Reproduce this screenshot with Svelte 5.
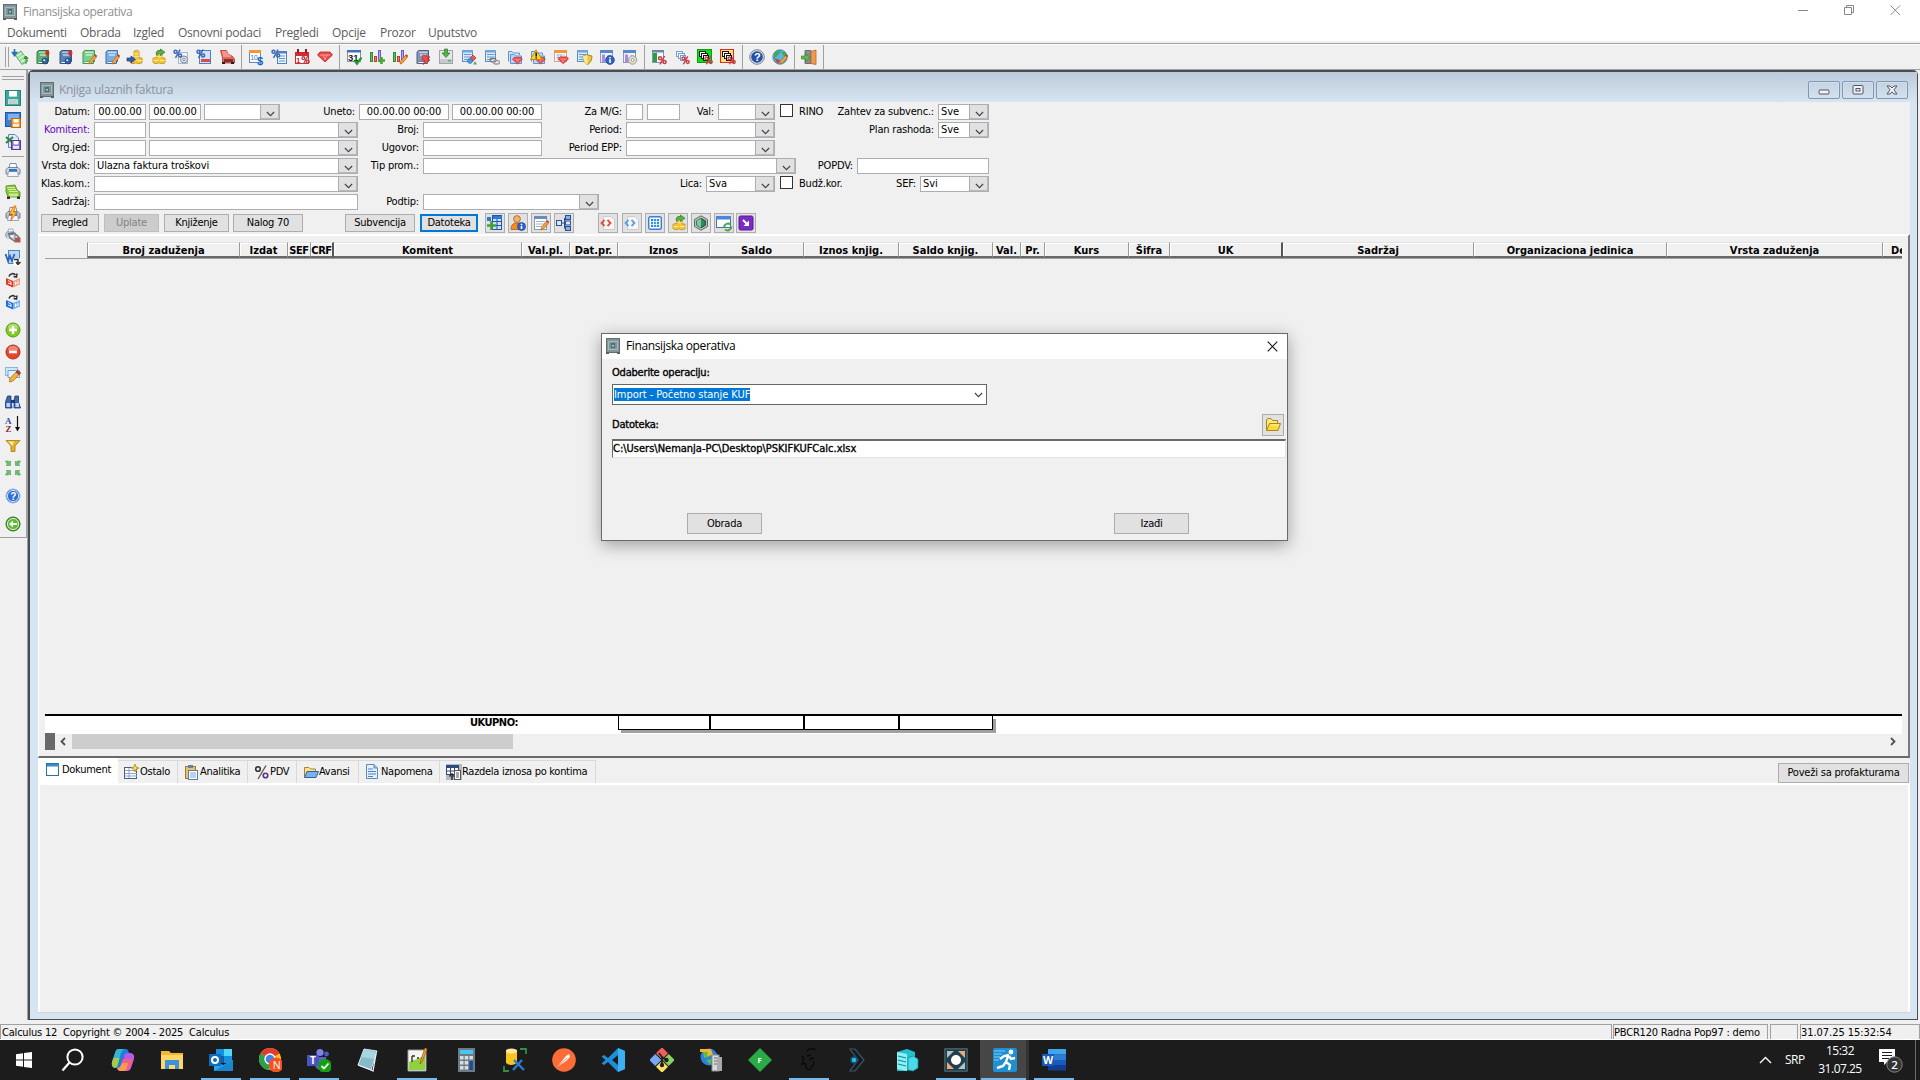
<script lang="ts">
	type Item = { k: 'label' | 'text' | 'box' | 'combo' | 'check' | 'gap'; w: number; t?: string; cls?: string };

	const label = (w: number, t: string, cls = ''): Item => ({ k: 'label', w, t, cls });
	const text = (w: number, t: string): Item => ({ k: 'text', w, t });
	const box = (w: number, t = '', cls = ''): Item => ({ k: 'box', w, t, cls });
	const combo = (w: number, t = ''): Item => ({ k: 'combo', w, t });
	const gap = (w: number): Item => ({ k: 'gap', w });
	const check: Item = { k: 'check', w: 13 };

	const menu = ['Dokumenti', 'Obrada', 'Izgled', 'Osnovni podaci', 'Pregledi', 'Opcije', 'Prozor', 'Uputstvo'];
	const menuWidths = [73, 53, 45, 97, 57, 48, 48, 50];

	// Filter form, one array per line
	const rows: Item[][] = [
		[
			label(56, 'Datum:'), box(52, '00.00.00', 'num'), gap(3), box(52, '00.00.00', 'num'), gap(3), combo(76),
			label(79, 'Uneto:'), box(90, '00.00.00 00:00', 'num'), gap(3), box(90, '00.00.00 00:00', 'num'),
			label(84, 'Za M/G:'), box(17), gap(4), box(33), label(38, 'Val:'), combo(57),
			gap(5), check, text(40, 'RINO'), label(105, 'Zahtev za subvenc.:'), combo(51, 'Sve')
		],
		[
			label(56, 'Komitent:', 'link'), box(52), gap(3), combo(209), label(65, 'Broj:'), box(119),
			label(84, 'Period:'), combo(149), label(163, 'Plan rashoda:'), combo(51, 'Sve')
		],
		[
			label(56, 'Org.jed:'), box(52), gap(3), combo(209), label(65, 'Ugovor:'), box(119),
			label(84, 'Period EPP:'), combo(149)
		],
		[
			label(56, 'Vrsta dok:'), combo(264, 'Ulazna faktura troškovi'), label(65, 'Tip prom.:'), combo(373),
			label(61, 'POPDV:'), box(132)
		],
		[
			label(56, 'Klas.kom.:'), combo(264), label(348, 'Lica:'), combo(69, 'Sva'),
			gap(5), check, text(60, 'Budž.kor.'), label(67, 'SEF:'), combo(69, 'Svi')
		],
		[label(56, 'Sadržaj:'), box(264), label(65, 'Podtip:'), combo(176)]
	];

	const columns: [string, number][] = [
		['Broj zaduženja', 153], ['Izdat', 48], ['SEF', 23], ['CRF', 23], ['Komitent', 188], ['Val.pl.', 48],
		['Dat.pr.', 48], ['Iznos', 92], ['Saldo', 94], ['Iznos knjig.', 95], ['Saldo knjig.', 94], ['Val.', 28],
		['Pr.', 24], ['Kurs', 84], ['Šifra', 41], ['UK', 113], ['Sadržaj', 191], ['Organizaciona jedinica', 193],
		['Vrsta zaduženja', 216], ['De', 32]
	];

	const buttons: [string, number, number, string][] = [
		['Pregled', 58, 5, ''], ['Uplate', 55, 5, 'off'], ['Knjiženje', 65, 4, ''], ['Nalog 70', 70, 42, ''],
		['Subvencija', 70, 5, ''], ['Datoteka', 58, 7, 'focus']
	];
	const iconButtons: [string, number][] = [
		['addTable', 3], ['userInfo', 3], ['formEdit', 3], ['tree', 24], ['codeRed', 4], ['codeBlue', 3],
		['grid', 3], ['coinsOut', 3], ['hex', 3], ['winRefresh', 2], ['purple', 0]
	];

	const tabs: [string, string, number][] = [
		['tabWindow', 'Dokument', 80], ['tabNew', 'Ostalo', 60], ['tabClip', 'Analitika', 70], ['tabPercent', 'PDV', 49],
		['tabFolder', 'Avansi', 62], ['tabNote', 'Napomena', 81], ['tabSplit', 'Razdela iznosa po kontima', 156]
	];

	const topBar = [
		'money', 'bookGreen', 'bookBlue', 'bookGreenPen', 'bookBluePen', 'coinsIn', 'coinsOut', 'pctGear', 'pctMinus', 'printRed', '|',
		'cal10', 'pctDoc', 'calPct', 'gem', '|',
		'cal31', 'barsAdd', 'barsPen', 'bookBolt', 'drive', 'listShapes', 'listLink', 'foldersGem', 'foldersWarn', 'calGem',
		'listShield', 'winInfo', 'winClock', '|',
		'sheetPct', 'copyPct', 'copyGreen', 'copyRed', '|', 'help', 'globe', '|', 'exit', '|'
	];

	// name and the space under it
	const sideBar: [string, number][] = [
		['save', 6], ['saveGrid', 6], ['saveXls', 6], ['-', 5], ['print', 6], ['printGreen', 6], ['printBolt', 6], ['printLink', 6],
		['word', 6], ['boxRed', 6], ['boxBlue', 12], ['plus', 6], ['minus', 6], ['edit', 12], ['find', 6], ['sort', 6],
		['filter', 6], ['shrink', 12], ['helpBlue', 12], ['back', 0]
	];

	const r = (x: number, y: number, w: number, h: number, f: string, s = 'none') =>
		`<rect x="${x}" y="${y}" width="${w}" height="${h}" fill="${f}" stroke="${s}"/>`;
	const p = (d: string, f: string, s = 'none', w = 1) => `<path d="${d}" fill="${f}" stroke="${s}" stroke-width="${w}"/>`;
	const c = (x: number, y: number, rad: number, f: string, s = 'none', w = 1) =>
		`<circle cx="${x}" cy="${y}" r="${rad}" fill="${f}" stroke="${s}" stroke-width="${w}"/>`;
	const pct = (x: number, y: number, col: string, k = 1) =>
		c(x + 2 * k, y + 2.3 * k, 1.5 * k, 'none', col, 1.5 * k) + c(x + 6.6 * k, y + 6 * k, 1.5 * k, 'none', col, 1.5 * k) +
		p(`M${x + 6.6 * k} ${y}L${x + 2 * k} ${y + 8.4 * k}`, 'none', col, 1.5 * k);

	const pen = p('M8.5 12.5L13.2 6.5L15.3 8.2L10.5 14L8 15Z', '#f5a83c', '#b8681c', 0.8) + p('M13.2 6.5L14.4 5.2L16 6.8L15.3 8.2Z', '#c8322c');
	const book = (a: string, b: string) =>
		p('M3.5 1.5H13.5V12.5H4L2 14.5V3Z', a, b) + p('M2.5 14.5H12.5V12.5', 'none', b) + p('M4 3.2H12.5M3.5 13.3H12', 'none', '#fff', 0.8) + r(5, 5, 6, 2, '#ffffff77');
	const marbles = c(12.3, 4, 2.2, '#e02a20') + c(10, 12, 3, '#3564ad', '#16355e', 0.6) + p('M12.3 6V10', 'none', '#555', 0.8) + c(9.2, 11.2, 0.9, '#fff');
	const coins = p('M7 2.5C7 1 12 1 12 2.5V9H15V13.5C15 15 9 15 9 13.5C9 15 3 15 3 13V9.5C3 8.5 7 8.5 7 9Z', '#f2c838', '#c08a10', 0.8) +
		p('M7 4.5C8 5.5 11 5.5 12 4.5M7 7C8 8 11 8 12 7M3.5 11.5H8M10 11.5H15', 'none', '#fff3a8', 0.8);
	const doc = (x: number, y: number, w: number, h: number, s = '#4d83c4') =>
		r(x + 0.5, y + 0.5, w, h, '#eef6ff', s) + p(`M${x + 2} ${y + 5}h${w - 3}M${x + 2} ${y + 7.5}h${w - 3}M${x + 2} ${y + 10}h${w - 3}`, 'none', s, 0.9);
	const gem = (x: number, y: number, k = 1) =>
		`<g transform="translate(${x} ${y}) scale(${k})">` + p('M2.5 0.5H12.5L15 3.5L7.5 10.5L0 3.5Z', '#e84a4a', '#c9302f', 0.9) +
		p('M2.5 3.5H12.5M5.5 3.5L7.5 8L9.5 3.5', 'none', '#fbb5b2', 0.8) + '</g>';
	const bars = r(1.5, 3.5, 2, 9, '#5fc46c', '#2d8a3b') + r(5.5, 7.5, 2, 5, '#f37b6e', '#c43a30') + r(9.5, 1.5, 2, 11, '#b3a6f5', '#6a58c9');
	const list = r(1.5, 1.5, 10, 11, '#d9ebfb', '#5a8fc6') + r(1, 1, 11, 2.5, '#6fa5dc') + p('M3 5.5H10.5M3 8H10.5M3 10.5H8', 'none', '#5a8fc6', 0.9);
	const folders = p('M1.5 12.5V2.5H5L6.5 4H12.5V6', '#cfe3fa', '#5c93d3') + p('M3.5 14.5V5.5H7L8.5 7H14.5V14.5Z', '#b7d6f8', '#5c93d3');
	const win = r(1.5, 1.5, 12, 12, '#eef3fa', '#8b9cb5') + r(1, 1, 13, 3, '#5689c7') + r(3, 5.5, 3, 8, '#a98ae8') + r(8, 6, 4, 2, '#c5d4e6');
	const copies = (bg: string, s: string) =>
		bg + r(2.5, 2.5, 6, 5, '#fff', s) + r(4.5, 4.5, 6, 5, '#fff', s) + r(6.5, 6.5, 5, 5, '#fff', s) + pct(7.5, 7.3, '#c53f48', 0.95);
	const floppy = (x: number, y: number, w: number, f: string, s: string) =>
		r(x + 0.5, y + 0.5, w - 1, w - 1, f, s) + r(x + w * 0.25, y + 1, w * 0.5, w * 0.35, '#fff') + r(x + w * 0.2, y + w * 0.58, w * 0.6, w * 0.3, '#e8f0e4');
	const printer = (a: string) =>
		p('M4 6L5 1.5H11L12 6', '#f8fbff', '#8090a8') + p('M1 7.5L3 5.5H13L15 7.5V12H1Z', a, '#606b7e', 0.8) +
		p('M3.5 9.5H12.5L13.5 14.5H2.5Z', '#f4f6fa', '#8a94a4', 0.8) + r(4, 7, 8, 2.5, '#2f75c9');
	const doll = (a: string, b: string) =>
		p('M1 6L8 9V15.5L1 12.5Z', a) + p('M8 9L15 6V12.5L8 15.5Z', b) + p('M3 8.5L6 10V13M3 11L6 12M10 12L13 10.5M10.5 9.5V13M13 8.5V12', 'none', '#fff', 0.9) +
		p('M4 4.5C5 1 9 1 10.5 3M12 1.5L11.5 5L8.5 4.5', 'none', '#333', 1.6);
	const ball = (a: string, b: string) => c(8, 8, 7, a, b) + `<ellipse cx="8" cy="4.8" rx="5" ry="3" fill="#fff" opacity=".35"/>`;

	const icons: Record<string, string> = {
		app: r(1.5, 0.5, 13, 14, '#879497', '#5f6f72') + r(1, 14, 3, 2, '#526164') + r(12, 14, 3, 2, '#526164') + r(3.5, 3.5, 9, 8, '#7d9598', '#a9bcbd') + r(6, 5, 4, 5, '#4b7375') + r(7, 7, 2, 1.5, '#a8d2ce'),
		money: p('M3 6L9 2L16 12L10 15.5Z', '#9edf9f', '#4a9d55', 0.8) + p('M5 7L9.5 4M7 10L12 6.5M9 13L14 9.5', 'none', '#dff7de', 1.2) + p('M2.5 0V4M0.5 3.5L2.5 6.5L4.5 3.5Z', '#2b6fb8', '#2b6fb8', 1.6) + p('M14 15V9M12 9.5L14 7L16 9.5Z', '#3faa45', '#2f8b38', 1),
		bookGreen: book('#5fae72', '#2d7a45') + marbles,
		bookBlue: book('#5c83b8', '#2f5688') + marbles,
		bookGreenPen: book('#7ccf8a', '#36975b') + pen,
		bookBluePen: book('#79aee2', '#3b6fa6') + pen,
		coinsIn: coins + p('M0 9H4V7L8.5 10.5L4 14V12H0Z', '#2e5fb0', '#1c3d78', 0.7),
		coinsOut: coins + p('M6 4C7 1.5 9 1.5 10.5 1.5V0L15 3.2L10.5 6.5V4.8C9 4.8 8 5 7 6.5Z', '#58b04d', '#2c7a2a', 0.7),
		pctGear: r(5.5, 3.5, 9, 11, '#f0f4fa', '#a9b7c9') + c(11, 10.5, 3.5, '#dfe5ec', '#7e8a99') + c(11, 10.5, 1.2, '#fff', '#7e8a99') + pct(0.5, 0.5, '#3d69b8'),
		pctMinus: r(3.5, 1.5, 11, 13, '#cfe2fa', '#4f7fc6') + r(5, 10, 9, 3, '#e4474a') + pct(0.5, 0.5, '#3d69b8'),
		printRed: p('M1.5 1.5H7.5L9 5L13 7L15.5 10V14H3.5V9Z', '#e2685c', '#b03830', 0.8) + p('M3 3H8M3.5 5H10M4 7H12', 'none', '#ffd0c8', 0.9) + r(5, 10, 9, 3, '#8b2d29') + r(3, 13, 3, 2, '#222') + r(12, 13, 3, 2, '#222'),
		cal10: r(1.5, 1.5, 11, 12, '#fff', '#5d8ac0') + r(1, 1, 12, 3, '#f2963c') + `<text x="2.5" y="11" font-size="6.5" fill="#3b6fa6">10</text><text x="9" y="15.5" font-size="11" font-weight="700" fill="#1668c4">$</text>`,
		pctDoc: doc(6, 2, 9, 12) + r(6, 2, 10, 2.5, '#4d83c4') + pct(0.5, 0.5, '#3d69b8'),
		calPct: r(1.5, 3.5, 13, 11, '#fff', '#d02c36') + r(1, 3, 14, 4, '#d02c36') + r(3, 0, 2, 4, '#a01722') + r(11, 0, 2, 4, '#a01722') + `<text x="2" y="14" font-size="8" font-weight="700" fill="#c02c36">1</text>` + pct(7.5, 7, '#c53f48', 0.95),
		gem: gem(0.5, 2.5),
		cal31: r(1.5, 1.5, 13, 11, '#fff', '#7f95b8') + r(1, 1, 14, 2.5, '#3e70bd') + `<text x="2" y="11.5" font-size="9.5" font-weight="700" fill="#222">31</text>` + p('M8.5 11.5L11 14.5L15.5 8.5', 'none', '#279a2c', 2.4),
		barsAdd: bars + p('M12.5 8V15M9 11.5H16', 'none', '#46a82e', 2.6),
		barsPen: bars + pen,
		bookBolt: book('#8493b8', '#505f86') + p('M8 6L15 8L12 10L15 11L8 15.5L10 11.5L7 11Z', '#ee4c45', '#b9282b', 0.7),
		drive: r(1.5, 1.5, 13, 13, '#e6e8ea', '#a0a5aa') + r(2, 10, 12, 4, '#c6cacf') + r(10, 11, 3, 1.5, '#57b957') + p('M6.5 0H9.5V4H12L8 8.5L4 4H6.5Z', '#58b04d', '#2c7a2a', 0.7),
		listShapes: list + p('M12 6L15 9L12 12L9 9Z', '#f0554c', '#b9282b', 0.7) + c(9, 12, 2.4, '#4e9be8', '#2867b0', 0.7) + p('M12 15.5L14 12L16 15.5Z', '#4eb04e'),
		listLink: list + `<rect x="6" y="9.5" width="6" height="3.4" rx="1.7" fill="none" stroke="#777" stroke-width="1.3"/><rect x="9.5" y="11.6" width="6" height="3.4" rx="1.7" fill="none" stroke="#999" stroke-width="1.3"/>`,
		foldersGem: folders + gem(5.5, 8, 0.66),
		foldersWarn: folders + gem(5.5, 8, 0.66) + p('M6 0.8L12 10.5H0.5Z', '#ffd22e', '#b78a06', 0.9) + p('M6.2 3.5V7.4M6.2 8.3V9.6', 'none', '#111', 1.5),
		calGem: r(1.5, 1.5, 12, 11, '#fff', '#c9a98a') + r(1, 1, 13, 3, '#f2963c') + p('M3 6H12M3 8.5H12M5 5V12M8 5V12', 'none', '#9db9dc', 0.9) + gem(5, 7.5, 0.7),
		listShield: list + p('M7 7L11.5 6L16 7C16 11 14 14.5 11.5 15.5C9 14.5 7 11 7 7Z', '#f1c540', '#96700c', 0.8) + p('M11.5 6V15.5C9 14.5 7 11 7 7Z', '#fae99b'),
		winInfo: win + c(11, 11, 4.4, '#2e62c8', '#1c3f8e', 0.7) + p('M11 8V9.3M11 10.2V13.8', 'none', '#fff', 1.7),
		winClock: win + c(10.5, 11, 4.2, '#e2e0d0', '#8e8c80', 0.8) + c(10.5, 11, 1.5, '#fff', '#777', 0.7),
		sheetPct: r(1.5, 1.5, 11, 12, '#f6faff', '#8297ae') + r(1, 1, 12, 2.5, '#6b86a6') + r(2, 4, 4, 9, '#2c9e42') + pct(7, 7, '#c53f48'),
		copyPct: copies('', '#6f9fd0'),
		copyGreen: copies(r(0.5, 0.5, 14, 13, '#0be015', '#06a30d'), '#111'),
		copyRed: copies(r(0.5, 0.5, 13, 13, '#ffe27d', '#e22a1d'), '#111'),
		help: c(8, 8, 7.3, '#d5dbe6', '#7d8797') + c(8, 8, 5.8, '#2550a8') + `<text x="5" y="12" font-size="11" font-weight="700" fill="#fff">?</text>`,
		globe: c(8, 8, 7.2, '#55b6e2', '#3878a0', 0.8) + p('M2 5C4 1 8 1 9 2L7 5L4 8L2 9ZM9 3L13 3L15 8L12 7Z', '#42a950') + p('M2 9L8 11L6 15Z', '#d53b3b') + pen,
		exit: p('M4 1.5H10V14.5H4Z', '#8a8d90', '#6c6f72') + p('M10 2.5L15 1V15.5L10 14.5Z', '#ee9b50', '#b4642a', 0.8) + p('M0.5 7H4.5V4.5L9 8.5L4.5 12.5V10H0.5Z', '#62b84f', '#35822c', 0.7),
		save: floppy(0, 0, 16, '#3fa5a0', '#277c7c') + p('M4 11H12M4 13H12', 'none', '#7da49a', 0.8),
		saveGrid: r(0.5, 0.5, 15, 14, '#3d7fd4', '#2055a3') + r(3, 2, 11, 6, '#7db0ee') + floppy(6, 6, 10, '#f49a24', '#c06c0c'),
		saveXls: p('M3.5 0.5H10L13.5 4V13.5H3.5Z', '#dfeaf8', '#5f86b8') + p('M1 3L8 9M8 3L1 9', 'none', '#2f8540', 2.2) + floppy(6, 6, 10, '#8263d4', '#563aa3'),
		print: printer('#cfd5de'),
		printGreen: p('M1 2L10 1L12 6L15 8V13H3L1 8Z', '#8ec63c', '#4f8a15', 0.8) + p('M2 3.5H10M3 5.5H11M4 7.5H13', 'none', '#e4f7bb', 0.8) + r(4, 9.5, 9, 3, '#c9e894') + r(2, 12.5, 3, 2.5, '#333') + r(12, 12.5, 3, 2.5, '#333'),
		printBolt: printer('#b9c1ce') + p('M9 0L4 8H7.5L5.5 15L12 6H8.5L11 0Z', '#ffc02c', '#e0691c', 0.8),
		printLink: `<g transform="scale(.7)">${printer('#cfd5de')}</g>` + `<rect x="4" y="6" width="10" height="6" rx="3" transform="rotate(35 9 9)" fill="none" stroke="#777" stroke-width="1.5"/>` + r(10, 10, 5, 4, '#e24040', '#777'),
		word: r(3.5, 0.5, 11, 13, '#bcd6f5', '#4f84c4') + p('M0.5 4L3 11L5 6L7 11L9.5 4', 'none', '#2a62b4', 1.8) + r(8.5, 8.5, 7, 7, '#fff') + p('M9 9.5H13V14M13 14.5L11 12M13 14.5L15.5 12', 'none', '#333', 1.5),
		boxRed: doll('#dd3c22', '#f39c86'),
		boxBlue: doll('#1c6fdc', '#79b2f2'),
		plus: ball('#84c926', '#5c9a12') + p('M8 4V12M4 8H12', 'none', '#fff', 2.4),
		minus: ball('#e4452c', '#b02c1a') + p('M4 8H12', 'none', '#fff', 2.6),
		edit: r(0.5, 1.5, 12, 8, '#cfe6fa', '#86b7e0') + p('M3 4.5H14.5V11.5H7L5 14V11.5H3Z', '#e1f2fd', '#6aa3d4') +
			p('M5 12.5L11 6L14 8.5L8 15L4.5 16Z', '#f5b43c', '#b8681c', 0.8) + p('M11 6L12.5 4.5L15.8 7L14 8.5Z', '#c8322c', '#8e1f1f', 0.6),
		find: p('M2.5 2H6V6L7 14H0.5V8ZM10 2H13.5V8L15.5 14H9V6Z', '#3d66ad', '#1b3b77', 0.8) + r(6, 6, 4, 3, '#1b3b77') + r(1.5, 9, 3.5, 4, '#bdd2f2') + r(10.5, 9, 3.5, 4, '#bdd2f2'),
		sort: `<text x="0" y="7.5" font-size="9" font-weight="700" font-family="Liberation Serif, serif" fill="#2b4fa8">A</text><text x="0.5" y="15.5" font-size="9" font-weight="700" font-family="Liberation Serif, serif" fill="#8a2530">Z</text>` + p('M12.5 0V13', 'none', '#111', 1.2) + p('M10 11H15L12.5 15.5Z', '#111'),
		filter: p('M1 2.5H15L10 8V13.5H6V8Z', '#e3b12a', '#a9790e', 0.8) + p('M3 3.5H9L7.5 8', '#faea9d'),
		shrink: p('M0.5 1H3.5L4.5 2L5.5 1V5.5H1L2.3 4.3ZM15.5 1H12.5L11.5 2L10.5 1V5.5H15L13.7 4.3ZM0.5 15H3.5L4.5 14L5.5 15V10.5H1L2.3 11.7ZM15.5 15H12.5L11.5 14L10.5 15V10.5H15L13.7 11.7Z', '#6cbf6c', '#3e8f44', 0.5),
		helpBlue: c(8, 8, 7, '#2b6fd6', '#9db9dd') + c(8, 8, 5.6, '#2b6fd6', '#fff', 0.8) + `<text x="5.2" y="11.7" font-size="10" font-weight="700" fill="#fff">?</text>`,
		back: c(8, 8, 7, '#4fae2c', '#286f14') + c(8, 8, 5.6, '#5dbb37', '#fff', 0.8) + p('M4 8L8 4.5V7H12V9H8V11.5Z', '#fff'),
		addTable: r(5.5, 0.5, 9, 14, '#cfe0fa', '#2456a6') + r(6, 1, 9, 3, '#2e78d6') + p('M6 6.5H15M6 10.5H15M10 4V15', 'none', '#2456a6') + r(0, 2, 4, 4, '#2e78d6') + p('M4.5 6V15M0 10.5H9', 'none', '#43a03c', 2.6),
		userInfo: c(7, 4, 3.4, '#f0b273', '#a65f1b', 0.8) + p('M1 14.5C1 9 4 8 7 8S12 9 12 14.5Z', '#f08c28', '#b25c10', 0.8) + c(11.5, 11.5, 4, '#2e62c8', '#1c3f8e', 0.7) + p('M11.5 8.8V10M11.5 10.8V14', 'none', '#fff', 1.6),
		formEdit: r(1.5, 1.5, 12, 13, '#fff', '#8a99ad') + r(1, 1, 13, 3, '#6b8cb8') + p('M3 6.5H12M3 9H12M3 11.5H9', 'none', '#9fb1c8', 1.2) + pen,
		tree: r(0.5, 5.5, 5, 5, '#dbe7fa', '#2c4f92') + p('M6 8H9M8.5 3V13.5', 'none', '#2c4f92') + r(9.5, 0.5, 5, 4, '#87aee8', '#2c4f92') + r(9.5, 6, 5, 4, '#dbe7fa', '#2c4f92') + r(9.5, 11.5, 5, 4, '#87aee8', '#2c4f92'),
		codeRed: p('M3.5 1.5H11L14.5 5V14.5H3.5Z', '#f7f7f7', '#ccc') + p('M4.5 5L1.5 8L4.5 11M7.5 5L10.5 8L7.5 11', 'none', '#e8493c', 1.8),
		codeBlue: p('M3.5 1.5H11L14.5 5V14.5H3.5Z', '#f7f7f7', '#ccc') + p('M4.5 5L1.5 8L4.5 11M7.5 5L10.5 8L7.5 11', 'none', '#5c9fe6', 1.8),
		grid: `<rect x="1.7" y="1.7" width="12.6" height="12.6" rx="2" fill="#fff" stroke="#2b83e0" stroke-width="1.4"/>` + r(4, 4, 8, 8, '#2b83e0') + p('M4 6.6H12M4 9.4H12M6.6 4V12M9.4 4V12', 'none', '#fff', 0.9),
		hex: p('M8 0.8L14.5 4.5V11.5L8 15.2L1.5 11.5V4.5Z', '#b9c1bf', '#5e6a68') + p('M8 3.5L12.3 5.8V10.3L8 12.7L3.7 10.3V5.8Z', '#2f8a5c', '#1e3f33') + p('M8 3.5V12.7L3.7 10.3V5.8Z', '#7cc9a0'),
		winRefresh: r(0.5, 1.5, 14, 11, '#fff', '#4470b4') + r(0, 1, 15, 3.5, '#4c86da') + p('M8 12A4 4 0 0 1 14.5 9.5M15.5 11.5A4 4 0 0 1 9 14.5', 'none', '#4ea845', 2),
		purple: `<rect x="1" y="1" width="14" height="14" rx="1.5" fill="#7a2bc4" stroke="#5a179b"/>` + p('M5 5L8.5 8.5', 'none', '#fff', 2) + p('M11 5.5V11H5.5Z', '#fff'),
		folder: p('M1.5 13V2.5L3 1.5H6L7.5 3.5H12.5V6', '#ffe680', '#a9861b') + p('M1.5 13.5L4.5 6.5H15.5L13 13.5Z', '#ffd93b', '#a9861b') + p('M5.5 8H14', 'none', '#fff5b8'),
		tabWindow: r(0.5, 1.5, 12, 12, '#fff', '#2d6fa8') + r(1, 2, 12, 2.5, '#3b8bca'),
		tabNew: r(0.5, 3.5, 12, 11, '#fff', '#47608a') + p('M1 6.5H13M1 9.5H13M1 12H13M5 4V14', 'none', '#8da1c2') + p('M11 0L12.2 3L15 4L12.2 5L11 8L9.8 5L7 4L9.8 3Z', '#ffe24a', '#a88a18', 0.8),
		tabClip: r(1.5, 2.5, 10, 12, '#e8c070', '#9f7c34') + r(4, 1, 5, 3, '#6f7f95') + r(4.5, 6.5, 9, 9, '#fff', '#4f7fb8') + p('M6 9H12M6 11H12M6 13H12', 'none', '#7aa3d4'),
		tabPercent: c(4, 5, 2.3, 'none', '#333', 1.6) + c(11.5, 11.5, 2.3, 'none', '#5a3a7a', 1.6) + p('M12 1.5L4 15', 'none', '#555', 1.3),
		tabFolder: p('M1.5 13V3.5H6L7.5 5H12.5V8', '#ffe38a', '#a98628') + p('M1.5 13.5L4 7.5H15.5L13 13.5Z', '#7ab2ee', '#2b62a8'),
		tabNote: p('M1.5 0.5H9L12.5 4V14.5H1.5Z', '#e6f1fd', '#5b8ac2') + p('M9 0.5V4H12.5', '#9dc1ec', '#5b8ac2') + p('M3 5H8M3 7.5H11M3 10H11M3 12.5H8', 'none', '#4a7ec0'),
		tabSplit: r(0, 0, 16, 16, '#b4b9c2') + r(0.5, 1.5, 12, 9, '#fff', '#2f4b7c') + r(0, 1, 13, 3, '#2f4b7c') + p('M4.5 4V10M8.5 4V10M1 7H12', 'none', '#2f4b7c') + r(8.5, 6.5, 6, 9, '#fff', '#555') + p('M10 9H13M10 11H13M10 13H13', 'none', '#555') + p('M6 16V12M3.5 12.5L6 10L7.5 12.5', 'none', '#222', 1.4)
	};

	// Taskbar pictures use a 24x24 box
	const task: { id: string; run?: boolean; stack?: boolean; active?: boolean }[] = [
		{ id: 'copilot' }, { id: 'explorer' }, { id: 'outlook', run: true }, { id: 'chrome', run: true }, { id: 'teams', run: true },
		{ id: 'notepad' }, { id: 'npp', run: true }, { id: 'calc' }, { id: 'db' }, { id: 'postman' }, { id: 'vscode' }, { id: 'git' },
		{ id: 'ftp' }, { id: 'feather' }, { id: 'dark', run: true }, { id: 'arrow' }, { id: 'servers' },
		{ id: 'target', run: true, stack: true }, { id: 'runner', run: true, stack: true, active: true }, { id: 'wordApp', run: true }
	];
	const taskIcons: Record<string, string> = {
		copilot: p('M8 1H15Q17 1 18 5L19 8H13L10 17Q9 20 6 20H4Q0 19 1 14L4 5Q5 1 8 1Z', '#1b7fe0') + p('M7 1H13Q10 3 9 8L7 16Q6 20 4 20Q0 19 1 14L4 5Q5 1 7 1Z', '#35b5d0') + p('M2.5 10L8.5 10L7 16Q6 20 4 20Q0 19 1 14Z', '#a8c94a') + p('M17 5H20Q24 6 23 11L20 20Q19 23 16 23H9Q7 23 6 20Q9 20 10 17L13 8Q14 5 17 5Z', '#b65be8') + p('M6 20Q9 20 10 17L12 11H22L20 18Q18 23 15 23H9Q7 23 6 20Z', '#ee5f8c') + p('M6 20Q9 20 10 17L11 15H17L16 19Q15 23 13 23H9Q7 23 6 20Z', '#f79a52'),
		explorer: p('M1 3H9L11 5H23V21H1Z', '#f4b72f') + r(1, 7, 22, 14, '#ffd766') + p('M5 21V12H19V21H15V17H9V21Z', '#3a93dc'),
		outlook: r(7, 1, 16, 14, '#1490df') + r(15, 1, 8, 7, '#50d9ff') + r(7, 8, 8, 7, '#0f5fae') + p('M5 12L14 17L24 12V23H5Z', '#28a8ea') + p('M5 23L24 12V23Z', '#1a86d0') + r(0, 6, 12, 12, '#0f6cbd') + c(6, 12, 3, 'none', '#fff', 2),
		chrome: c(12, 11, 11, '#fbc116') + p('M12 11L2.5 5.5A11 11 0 0 1 21.5 5.5Z', '#e33b2e') + p('M12 11L2.5 5.5A11 11 0 0 0 11 22Z', '#2aa148') + c(12, 11, 5, '#3f82ee', '#fff', 1.4) + c(18, 17, 7.4, '#f4511e') + `<text x="14.8" y="21" font-size="10.5" fill="#fff">N</text>`,
		teams: c(19.5, 6, 2.4, '#5059c9') + c(13, 4.5, 3.6, '#7b83eb') + p('M9 9H19V17Q18 22 13 22Q8 21 8 16Z', '#5b62d4') + r(0, 7, 12, 11, '#4b53bc') + `<text x="3" y="16" font-size="10" font-weight="700" fill="#fff">T</text>` + c(18, 18, 7, '#13a10e') + p('M14.5 18L17 20.5L21.5 15.5', 'none', '#fff', 1.8),
		notepad: p('M8 1L21 3L15 22L2 17Z', '#86bcc9', '#d8e8ec') + p('M8 2L20 4L18 11L5 9Z', '#a9d5de') + p('M2 17L15 22L17 23L20 6', 'none', '#eef', 1.3),
		npp: p('M3 2H21V23H3Z', '#f6f6f0', '#999') + p('M4 14L20 8V22H4Z', '#8fd13f') + p('M7 8V14M7 8H10M12 10H14M16 10H17', 'none', '#333', 1.4) + p('M22 1L17 14L15 16L15.5 13L20 0Z', '#f3a72c', '#a35e12', 0.8),
		calc: r(4, 0, 17, 24, '#6f7a84') + r(6, 2, 13, 4, '#46c8ee') + r(6, 8, 3.5, 3.5, '#d8dde0') + r(10.7, 8, 3.5, 3.5, '#d8dde0') + r(15.4, 8, 3.5, 3.5, '#d8dde0') + r(6, 13, 3.5, 3.5, '#d8dde0') + r(10.7, 13, 3.5, 3.5, '#d8dde0') + r(15.4, 13, 3.5, 9, '#164f96') + r(6, 18, 3.5, 3.5, '#d8dde0') + r(10.7, 18, 3.5, 3.5, '#d8dde0'),
		db: p('M3 3Q8 0 14 3V15Q8 19 3 15Z', '#f7c51e') + `<ellipse cx="8.5" cy="3" rx="5.7" ry="2.6" fill="#ffe9a0"/>` + p('M17 1H23V6M1 18V23H6', 'none', '#2f8f45', 1.8) + p('M10 22L19 12M11 12L21 22', 'none', '#2b7cd0', 2.4),
		postman: c(12, 12, 11.8, '#ff6c37') + p('M5 19L14 8L17 6L18 9L14 13Z', '#fff') + p('M7 17L15 10', 'none', '#ff6c37', 0.8),
		vscode: p('M17 0L24 3V21L17 24L7 14L3 17L0.5 15.5L4.5 12L0.5 8.5L3 7L7 10ZM17 7L11 12L17 17Z', '#1f8fdb') + p('M17 0L24 3V21L17 24Z', '#3cb0f2'),
		git: `<g transform="rotate(45 12 12)">` + r(3, 3, 8.5, 8.5, '#f05f5a') + r(12.5, 3, 8.5, 8.5, '#8ccf63') + r(3, 12.5, 8.5, 8.5, '#78a9f4') + r(12.5, 12.5, 8.5, 8.5, '#fbdf6b') + '</g>' + p('M9 5L12 9V17M12 9L16 12', 'none', '#222', 1.8) + c(12, 17, 2.2, '#222') + c(16.5, 12, 2.2, '#222'),
		ftp: c(10, 9, 8.5, '#2e7edc') + p('M4 4Q9 2 13 5L10 9L5 10ZM7 12L13 11L11 17Z', '#59c04a') + p('M1 1L12 1L14 7L8 8L9 4H1Z', '#f6b52b') + r(13, 7, 7, 16, '#d9dadc', '#8b8d90') + r(18, 9, 5, 14, '#a7a9ac') + p('M15 10H18M15 13H18M15 16H18', 'none', '#666'),
		feather: p('M12 0L24 12L12 24L0 12Z', '#2bab45') + `<text x="9.6" y="15" font-size="7.5" font-weight="700" fill="#fff">F</text>`,
		dark: p('M10 3Q13 -1 19 2M5 8Q8 11 5 16Q10 14 9 20Q14 24 15 18Q18 16 16 13M10 8L14 7M12 11L17 10', 'none', '#0a0a0a', 1.3),
		arrow: p('M4 1L9 1L18 12L9 23H4L12 12Z', '#151b22', '#3c5566', 1.2) + c(8, 12, 3, '#27b9e8', '#12506a', 1.4),
		servers: p('M2 4L12 1L20 4V12L12 23H2Z', '#25bfd0') + p('M2 4L12 6V23L2 21Z', '#8df0f4') + p('M3 8L11 10M3 12L11 14M3 16L11 18', 'none', '#15899b', 1.2) + p('M13 10L18 8L23 11V20L18 23L13 22Z', '#48dbe6', '#138595', 0.7),
		target: r(0.8, 0.8, 22.4, 22.4, '#21404e', '#4d7383') + p('M3 3H10L3 10Z', '#b5c0c4') + p('M21 3H14L21 10Z', '#f2a675') + p('M3 21H10L3 14Z', '#f2a675') + p('M21 21H14L21 14Z', '#b5c0c4') + c(12, 12, 6.5, '#21404e') + c(12, 12, 5, '#fff'),
		runner: `<rect width="24" height="24" rx="2" fill="#1e8fd0"/>` + p('M1 3H12M1 6H9M1 9H7M1 12H6', 'none', '#7fd0f6', 1.2) + c(18, 4, 2.4, '#fff') + p('M16 7L11 8L7 11M15 8L13 14L17 17L16 22M13 14L10 18L4 20M16 8L18 11L22 10', 'none', '#fff', 2.4),
		wordApp: r(6, 1, 18, 5.6, '#41a5ee') + r(6, 6.5, 18, 5.5, '#2b7cd3') + r(6, 12, 18, 5.5, '#185abd') + r(6, 17.5, 18, 5, '#103f91') + r(0, 6, 12, 12, '#185abd') + `<text x="1" y="16" font-size="10.5" font-weight="700" fill="#fff">W</text>`
	};
</script>

{#snippet icon(name: string)}
	<svg class="icon" viewBox="0 0 16 16">{@html icons[name]}</svg>
{/snippet}

{#snippet chevron()}
	<svg class="chev" viewBox="0 0 10 6"><path d="M1 0.8L5 4.8L9 0.8" fill="none" stroke="currentColor" stroke-width="1.3" /></svg>
{/snippet}

<div class="screen">
	<header class="title">
		{@render icon('app')}
		<span>Finansijska operativa</span>
		<div class="win-buttons">
			<svg viewBox="0 0 11 11"><path d="M0 5.5H10" /></svg>
			<svg viewBox="0 0 11 11"><path d="M0.5 2.5H7.5V9.5H0.5ZM2.5 2.5V0.5H9.5V7.5H7.5" /></svg>
			<svg viewBox="0 0 11 11"><path d="M0.5 0.5L10 10M10 0.5L0.5 10" /></svg>
		</div>
	</header>
	<nav class="menu">
		{#each menu as m, i}
			<span style="width: {menuWidths[i]}px">{m}</span>
		{/each}
	</nav>
	<div class="toolbar">
		<i class="grip"></i>
		{#each topBar as t}
			{#if t === '|'}
				<i class="sep"></i>
			{:else}
				{@render icon(t)}
			{/if}
		{/each}
	</div>

	<div class="work">
		<aside>
			<div class="side">
				<i class="grip-h"></i>
				{#each sideBar as [name, space]}
					{#if name === '-'}
						<i class="sep-h" style="margin-bottom: {space}px"></i>
					{:else}
						<span style="margin-bottom: {space}px">{@render icon(name)}</span>
					{/if}
				{/each}
			</div>
		</aside>

		<main class="mdi">
			<div class="mdi-title">
				{@render icon('app')}
				<span>Knjiga ulaznih faktura</span>
				<div class="mdi-buttons">
					<b><svg viewBox="0 0 14 12"><rect x="2" y="6" width="10" height="4" rx="1" /></svg></b>
					<b><svg viewBox="0 0 14 12"><rect x="2" y="1.5" width="10" height="8.5" rx="1" /><rect x="5" y="4.5" width="4" height="2.5" /></svg></b>
					<b><svg viewBox="0 0 14 12"><path d="M2 2H5L7 4L9 2H12L9 5.8L12 10H9L7 7.8L5 10H2L5 5.8Z" /></svg></b>
				</div>
			</div>

			<div class="client">
				<div class="form">
					{#each rows as row}
						<div class="row">
							{#each row as it}
								{#if it.k === 'combo'}
									<div class="field combo" style="width: {it.w}px">
										<span>{it.t}</span>
										<i>{@render chevron()}</i>
									</div>
								{:else if it.k === 'box'}
									<div class="field {it.cls}" style="width: {it.w}px"><span>{it.t}</span></div>
								{:else}
									<div class="{it.k} {it.cls ?? ''}" style="width: {it.w}px">{it.t ?? ''}</div>
								{/if}
							{/each}
						</div>
					{/each}
				</div>

				<div class="actions">
					{#each buttons as [t, w, g, cls]}
						<button class={cls} style="width: {w}px; margin-right: {g}px">{t}</button>
					{/each}
					{#each iconButtons as [name, g]}
						<button class="ib" style="margin-right: {g}px">{@render icon(name)}</button>
					{/each}
				</div>

				<section class="table">
					<div class="thead">
						{#each columns as [t, w]}
							<div class="th" class:tight={t === 'SEF' || t === 'CRF'} class:dark={t === 'CRF' || t === 'UK'} style="width: {w}px">{t}</div>
						{/each}
					</div>
					<div class="tbody"></div>
					<div class="total">
						<b>UKUPNO:</b>
						<div class="sums"><i></i><i></i><i></i><i></i></div>
					</div>
					<div class="scroll">
						<i class="split"></i>
						<svg viewBox="0 0 6 9"><path d="M5 1L1.5 4.5L5 8" /></svg>
						<i class="thumb"></i>
						<svg class="right" viewBox="0 0 6 9"><path d="M1 1L4.5 4.5L1 8" /></svg>
					</div>
				</section>

				<section class="bottom">
					<div class="tabs">
						{#each tabs as [ic, t, w], i}
							<div class="tab" class:on={i === 0} style="width: {w}px">
								{@render icon(ic)}<span>{t}</span>
							</div>
						{/each}
						<button class="link-btn">Poveži sa profakturama</button>
					</div>
					<div class="pane"></div>
				</section>
			</div>
		</main>
	</div>

	<footer class="status">
		<span class="s0">Calculus 12&nbsp; Copyright © 2004 - 2025&nbsp; Calculus</span>
		<span class="s1">PBCR120 Radna Pop97 : demo</span>
		<span class="s2"></span>
		<span class="s3">31.07.25 15:32:54</span>
	</footer>

	<div class="taskbar">
		<div class="slot start">
			<svg viewBox="0 0 16 16"><path d="M0 2.3L7 1.3V7.6H0ZM8 1.1L16 0V7.6H8ZM0 8.5H7V14.8L0 13.8ZM8 8.5H16V16L8 15Z" fill="#fff" /></svg>
		</div>
		<div class="slot search">
			<svg viewBox="0 0 24 24"><circle cx="14" cy="9" r="7.6" fill="none" stroke="#fff" stroke-width="2" /><path d="M8.5 14.5L1.5 22.5" stroke="#fff" stroke-width="2.2" /></svg>
		</div>
		{#each task as a}
			<div class="slot" class:run={a.run} class:stack={a.stack} class:active={a.active}>
				<svg viewBox="0 0 24 24">{@html taskIcons[a.id]}</svg>
			</div>
		{/each}
		<div class="tray">
			<svg class="up" viewBox="0 0 13 8"><path d="M1 7L6.5 1.5L12 7" fill="none" stroke="#fff" stroke-width="1.4" /></svg>
			<span class="lang">SRP</span>
			<span class="clock">15:32<br />31.07.25</span>
			<svg class="note" viewBox="0 0 26 26">
				<path d="M1 2H17V15H9L6 18V15H1Z" fill="#fff" />
				<path d="M4 5.5H14M4 8.5H14M4 11.5H11" stroke="#1c1c1c" stroke-width="1.2" />
				<circle cx="16.5" cy="17.5" r="7.7" fill="#333" stroke="#888" />
				<text x="13.2" y="21.7" font-size="11.5" font-weight="600" fill="#fff">2</text>
			</svg>
			<i class="peek"></i>
		</div>
	</div>

	<div class="dialog">
		<div class="dlg-title">
			{@render icon('app')}
			<span>Finansijska operativa</span>
			<svg class="x" viewBox="0 0 12 12"><path d="M0.8 0.8L11.2 11.2M11.2 0.8L0.8 11.2" stroke="#111" stroke-width="1.2" /></svg>
		</div>
		<div class="dlg-body">
			<div class="heavy">Odaberite operaciju:</div>
			<div class="select"><mark>Import - Početno stanje KUF</mark>{@render chevron()}</div>
			<div class="file-head">
				<span class="heavy">Datoteka:</span>
				<button>{@render icon('folder')}</button>
			</div>
			<div class="path heavy">C:\Users\Nemanja-PC\Desktop\PSKIFKUFCalc.xlsx</div>
			<div class="dlg-buttons">
				<button>Obrada</button>
				<button>Izađi</button>
			</div>
		</div>
	</div>
</div>

<style>
	:global(body) {
		margin: 0;
		background: #f0f0f0;
	}

	.screen {
		position: relative;
		width: 1920px;
		height: 1080px;
		display: flex;
		flex-direction: column;
		overflow: hidden;
		background: #f0f0f0;
		color: #000;
		font: 11px/14px 'DejaVu Sans Condensed', 'DejaVu Sans', sans-serif;
		letter-spacing: -0.2px;
		white-space: nowrap;
	}

	.screen * {
		box-sizing: border-box;
	}

	.screen svg {
		display: block;
		flex: none;
	}

	.screen .icon {
		width: 16px;
		height: 16px;
		overflow: visible;
		font-family: 'Liberation Sans', sans-serif;
		letter-spacing: 0;
	}

	button {
		padding: 0;
		font: inherit;
		letter-spacing: -0.25px;
		color: inherit;
		background: #e1e1e1;
		border: 1px solid #adadad;
		border-radius: 0;
		display: flex;
		align-items: center;
		justify-content: center;
	}

	/* main window */
	.title {
		flex: none;
		height: 23px;
		padding: 0 19px 0 2px;
		display: flex;
		align-items: center;
		gap: 5px;
		background: #fff;
		color: #8f8f8f;
		font: 12px/16px 'Open Sans', sans-serif;
		letter-spacing: -0.37px;
	}

	.win-buttons {
		margin-left: auto;
		display: flex;
		gap: 35px;
		align-self: flex-start;
		padding-top: 5px;
	}

	.win-buttons svg {
		width: 11px;
		height: 11px;
		fill: none;
		stroke: #888;
	}

	.menu {
		flex: none;
		height: 20px;
		padding: 2px 0 0 7px;
		display: flex;
		align-items: center;
		background: #fff;
		border-bottom: 2px solid #f0f0f0;
		color: #5c5c5c;
		font: 12px/16px 'Open Sans', sans-serif;
		letter-spacing: -0.25px;
	}

	.toolbar {
		flex: none;
		height: 27px;
		border-top: 1px solid #a0a0a0;
		border-bottom: 1px solid #a0a0a0;
		box-shadow: inset 0 1px #fff;
		display: flex;
		align-items: center;
		gap: 7px;
		padding: 1px 0 0 5px;
	}

	.toolbar .grip {
		width: 4px;
		height: 20px;
		margin-right: -4px;
		border: solid #a0a0a0;
		border-width: 0 1px;
	}

	.toolbar .sep {
		width: 1px;
		height: 24px;
		margin: 0 -1px;
		background: #a0a0a0;
	}

	.work {
		flex: 1;
		display: flex;
		min-height: 0;
	}

	aside {
		width: 28px;
		flex: none;
		border-right: 1px solid #a0a0a0;
	}

	.side {
		height: 468px;
		border-right: 1px solid #a0a0a0;
		border-bottom: 1px solid #a0a0a0;
		display: flex;
		flex-direction: column;
		padding: 6px 0 0 2px;
	}

	.side span {
		padding-left: 3px;
	}

	.grip-h {
		height: 4px;
		width: 22px;
		margin-bottom: 10px;
		border: solid #a0a0a0;
		border-width: 1px 0;
	}

	.sep-h {
		height: 1px;
		width: 22px;
		background: #a0a0a0;
	}

	/* child window */
	.mdi {
		width: 1890px;
		margin: 0;
		border: 2px solid #4a4d52;
		border-right-width: 1px;
		border-bottom-width: 1px;
		border-radius: 5px 5px 0 0;
		padding: 0 7px 6px 8px;
		background: #d7e4f2;
		display: flex;
		flex-direction: column;
	}

	.mdi-title {
		flex: none;
		height: 30px;
		margin: 0 -7px 0 -8px;
		padding: 6px 9px 0 9px;
		display: flex;
		align-items: center;
		gap: 4px;
		background: linear-gradient(#bccbd9, #d7e4f2);
		color: #8b929a;
		font: 12px/16px 'Open Sans', sans-serif;
		letter-spacing: -0.3px;
	}

	.mdi-buttons {
		margin-left: auto;
		display: flex;
		gap: 2px;
	}

	.mdi-buttons b {
		width: 32px;
		height: 18px;
		border: 1px solid #8496b2;
		border-radius: 2px;
		display: flex;
		align-items: center;
		justify-content: center;
		box-shadow: inset 0 0 0 1px #d3dfec;
	}

	.mdi-buttons svg {
		width: 14px;
		height: 12px;
		fill: #f2f2f2;
		stroke: #4f5468;
	}

	.client {
		flex: 1;
		display: flex;
		flex-direction: column;
		min-height: 0;
		background: #f0f0f0;
		border-bottom: 1px solid #d9d3d3;
	}

	.form {
		padding-top: 2px;
		display: flex;
		flex-direction: column;
		gap: 2px;
	}

	.row {
		display: flex;
		height: 16px;
	}

	.row > div {
		flex: none;
	}

	.label {
		display: flex;
		justify-content: flex-end;
		padding-right: 4px;
		line-height: 16px;
	}

	.label.link {
		color: #6a00c8;
	}

	.text {
		padding-left: 6px;
		line-height: 16px;
	}

	.field {
		height: 16px;
		border: 1px solid #abadb3;
		background: #fff;
		line-height: 14px;
		padding-left: 3px;
		letter-spacing: -0.1px;
	}

	.num {
		padding: 0;
		text-align: center;
	}

	.combo {
		display: flex;
		justify-content: space-between;
		padding-left: 2px;
	}

	.combo i {
		width: 19px;
		margin: 0;
		border-left: 1px solid #abadb3;
		background: #e1e1e1;
		box-shadow: inset -1px -1px #b8b8b8;
		display: flex;
		align-items: center;
		justify-content: center;
		padding-top: 4px;
		color: #444;
	}

	.chev {
		width: 9px;
		height: 6px;
	}

	.check {
		height: 13px;
		border: 1px solid #333;
		background: #fff;
	}

	.actions {
		height: 20px;
		margin: 3px 0 1px 3px;
		display: flex;
		align-items: center;
	}

	.actions button {
		height: 18px;
	}

	.actions .off {
		background: #ccc;
		border-color: #bfbfbf;
		color: #838383;
	}

	.actions .focus {
		border: 2px solid #0078d7;
	}

	.actions .ib {
		width: 20px;
		height: 20px;
	}

	/* grid of invoices */
	.table {
		height: 524px;
		border-top: 2px solid #fff;
		border-left: 1px solid #fff;
		border-right: 2px solid #7a7a7a;
		border-bottom: 2px solid #696969;
		padding: 6px 6px 0 6px;
		display: flex;
		flex-direction: column;
	}

	.thead {
		height: 17px;
		flex: none;
		padding-left: 42px;
		display: flex;
		overflow: hidden;
		border-bottom: 1px solid #a0a0a0;
	}

	.th {
		flex: none;
		height: 16px;
		border-right: 1px solid #9a9a9a;
		border-top: 1px solid #e3e3e3;
		border-bottom: 2px solid #696969;
		box-shadow: inset 1px 1px #fff;
		text-align: center;
		font-weight: 700;
		line-height: 16px;
		letter-spacing: 0;
	}

	.th.tight {
		letter-spacing: -0.4px;
	}

	.th:first-child {
		border-left: 1px solid #9a9a9a;
	}

	.th.dark {
		border-right: 2px solid #555;
	}

	.tbody {
		flex: 1;
	}

	.total {
		height: 20px;
		flex: none;
		display: flex;
		background: #fff;
		border-top: 2px solid #000;
	}

	.total b {
		width: 473px;
		text-align: right;
		line-height: 14px;
		margin-right: 100px;
		letter-spacing: -0.5px;
	}

	.sums {
		display: grid;
		grid-template-columns: 90px 94px 95px 94px;
		height: 14px;
		border: 1px solid #000;
		border-top: 0;
		box-shadow: 3px 3px #a0a0a0;
		background: #fff;
	}

	.sums i + i {
		border-left: 2px solid #000;
	}

	.scroll {
		height: 22px;
		flex: none;
		display: flex;
		align-items: flex-start;
	}

	.split {
		width: 10px;
		height: 17px;
		margin-top: -1px;
		background: #696969;
	}

	.scroll svg {
		width: 6px;
		height: 9px;
		margin: 3px 6px 0 5px;
		fill: none;
		stroke: #505050;
		stroke-width: 1.8;
	}

	.thumb {
		width: 441px;
		height: 15px;
		background: #cdcdcd;
	}

	.scroll .right {
		margin-left: auto;
	}

	.bottom {
		flex: 1;
		display: flex;
		flex-direction: column;
	}

	.tabs {
		height: 27px;
		display: flex;
		align-items: flex-start;
		border-bottom: 2px solid #fff;
	}

	.tab {
		height: 23px;
		margin-top: 2px;
		display: flex;
		align-items: center;
		gap: 0;
		padding-left: 6px;
		border: 1px solid #d9d9d9;
		border-width: 1px 1px 0 0;
		letter-spacing: -0.28px;
	}

	.tab.on {
		height: 25px;
		margin-top: 0;
		padding: 0 0 2px 8px;
		background: #fff;
		border: 0;
	}

	.link-btn {
		width: 131px;
		height: 20px;
		margin: 5px 1px 0 auto;
		letter-spacing: -0.2px;
	}

	.pane {
		flex: 1;
		border: 1px solid #fff;
		border-width: 0 2px;
	}

	.status {
		flex: none;
		height: 20px;
		padding-top: 4px;
		display: flex;
		gap: 2px;
		line-height: 15px;
		border-bottom: 1px solid #fff;
	}

	.status span {
		border: 1px solid #a0a0a0;
		border-width: 1px 1px 0 1px;
	}

	.s0 {
		width: 1612px;
		padding-left: 1px;
	}

	.s1 {
		width: 155px;
		margin-left: -1px;
	}

	.s2 {
		width: 28px;
	}

	.s3 {
		flex: 1;
		letter-spacing: -0.05px;
	}

	/* Windows taskbar */
	.taskbar {
		flex: none;
		height: 40px;
		display: flex;
		background: #1c1c1c;
		color: #fff;
		font-family: 'Open Sans', sans-serif;
	}

	.slot {
		width: 49px;
		display: flex;
		align-items: center;
		justify-content: center;
		flex: none;
		background: linear-gradient(#76b9ed, #76b9ed) 50% 100% / 0 2px no-repeat;
	}

	.slot svg {
		width: 24px;
		height: 24px;
	}

	.start {
		width: 48px;
	}

	.start svg {
		width: 16px;
		height: 16px;
	}

	.search {
		width: 49px;
		margin-right: 1px;
	}

	.slot.run {
		background-size: 40px 2px;
	}

	.slot.active {
		background-color: #464646;
		background-size: 48px 2px;
		box-shadow: inset -3px 0 #333;
	}

	.tray {
		margin-left: auto;
		display: flex;
		align-items: center;
		font-size: 12px;
		line-height: 18px;
		letter-spacing: -0.5px;
	}

	.up {
		width: 13px;
		height: 8px;
		margin-right: 13px;
	}

	.lang {
		width: 20px;
		margin-right: 13px;
	}

	.clock {
		width: 44px;
		text-align: center;
		margin-right: 16px;
	}

	.note {
		width: 26px;
		height: 26px;
		margin-right: 11px;
		letter-spacing: 0;
	}

	.peek {
		width: 1px;
		height: 40px;
		margin-right: 4px;
		background: #6b6b6b;
	}

	/* import dialog floats over the main window */
	.dialog {
		position: absolute;
		left: 601px;
		top: 333px;
		width: 687px;
		height: 208px;
		display: flex;
		flex-direction: column;
		background: #f0f0f0;
		border: 1px solid #6a6a6a;
		box-shadow: 0 4px 16px rgba(0, 0, 0, 0.35);
	}

	.dlg-title {
		height: 25px;
		flex: none;
		display: flex;
		align-items: center;
		gap: 5px;
		padding: 0 9px 1px 3px;
		background: #fff;
		font: 12px/16px 'Open Sans', sans-serif;
		letter-spacing: -0.37px;
	}

	.dlg-title .x {
		width: 11px;
		height: 11px;
		margin-left: auto;
	}

	.dlg-body {
		flex: 1;
		display: flex;
		flex-direction: column;
		padding: 7px 1px 6px 10px;
	}

	.heavy {
		letter-spacing: -0.2px;
		-webkit-text-stroke: 0.35px #000;
	}

	.select {
		width: 375px;
		height: 21px;
		margin-top: 4px;
		padding: 0 3px 0 1px;
		display: flex;
		align-items: center;
		justify-content: space-between;
		background: #fff;
		border: 1px solid #666;
		color: #444;
	}

	.select mark {
		background: #0078d7;
		color: #fff;
		line-height: 13px;
		letter-spacing: -0.05px;
	}

	.file-head {
		display: flex;
		align-items: center;
		justify-content: space-between;
		margin-top: 9px;
		padding-right: 2px;
	}

	.file-head button {
		width: 22px;
		height: 22px;
	}

	.path {
		height: 19px;
		margin-top: 3px;
		background: #fff;
		border: 1px solid #e3e3e3;
		border-top: 2px solid #696969;
		border-left: 1px solid #696969;
		line-height: 16px;
		letter-spacing: 0;
	}

	.dlg-buttons {
		margin-top: auto;
		display: flex;
		padding: 0 97px 0 75px;
		justify-content: space-between;
	}

	.dlg-buttons button {
		width: 75px;
		height: 21px;
	}
</style>
